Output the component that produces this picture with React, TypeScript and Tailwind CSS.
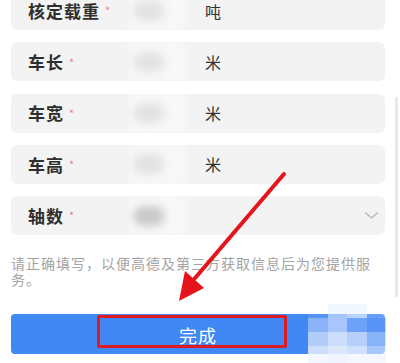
import React from "react";

const rows: { label: string; unit?: string; select?: boolean }[] = [
  { label: "核定载重", unit: "吨" },
  { label: "车长", unit: "米" },
  { label: "车宽", unit: "米" },
  { label: "车高", unit: "米" },
  { label: "轴数", select: true },
];

const font = { fontFamily: '"Noto Sans CJK SC", "Noto Sans", sans-serif' };

function FieldRow({ label, unit, select }: { label: string; unit?: string; select?: boolean }) {
  return (
    <div className="relative h-[39px] rounded-[6px] bg-[#f3f3f3] flex items-center overflow-hidden">
      {/* blurred value area */}
      <div className="absolute left-[118px] top-0 h-full w-[56px] bg-[#f8f8f8] blur-[3px]" />
      <div className="relative flex items-center pl-[17px] w-[194px]">
        <span className="text-[17px] font-bold tracking-[1px] text-[#2e2e2e]">{label}</span>
        <span className="ml-[5px] text-[11px] text-[#ec8080]">*</span>
        <div
          className={`absolute left-[122px] w-[32px] h-[20px] rounded-full blur-[4px] ${
            select ? "bg-[#c9c9c9]" : "bg-[#e2e2e2]"
          }`}
        />
      </div>
      {unit && <span className="relative text-[16px] text-[#333]">{unit}</span>}
      {select && (
        <svg className="absolute left-[353px]" width="15" height="9" viewBox="0 0 15 9">
          <path d="M1 1.5 L7.5 7 L14 1.5" fill="none" stroke="#b5b5b5" strokeWidth="1.3" />
        </svg>
      )}
    </div>
  );
}

export default function App() {
  return (
    <div className="relative w-[400px] h-[363px] bg-white overflow-hidden" style={font}>
      <div className="px-[11px] pr-[15px] -mt-[9px] flex flex-col gap-[12.25px]">
        {rows.map((r) => (
          <FieldRow key={r.label} {...r} />
        ))}
      </div>

      <p className="px-[11px] pr-[15px] mt-[20px] text-[14px] leading-[16px] tracking-[1px] text-[#a3a3a3]">
        请正确填写，以便高德及第三方获取信息后为您提供服务。
      </p>

      <div className="px-[11px] pr-[15px] mt-[27px]">
        <button className="relative w-full h-[40px] rounded-[4px] bg-[#4288f5] flex items-center justify-center">
          <span className="text-[18px] text-white tracking-[1px] mt-[2px]">完成</span>
          {/* red highlight frame */}
          <span className="absolute left-[86px] top-[1px] w-[190px] h-[33px] border-[3px] border-[#de1a22] rounded-[2px]" />
        </button>
      </div>

      {/* scrollbar */}
      <div className="absolute left-[395px] top-[97px] w-[3px] h-[200px] rounded-full bg-[#e8e8e8]" />

      {/* pixelated watermark */}
      <div className="absolute left-[308px] top-[304px] grid grid-cols-4 w-[78px]">
        <div className="h-[14px] bg-white/10" />
        <div className="h-[14px] bg-[#e8f0ff]/60" />
        <div className="h-[14px] bg-[#eef4ff]/70" />
        <div className="h-[14px] bg-white/20" />
        <div className="h-[14px] bg-[#a9c6fb]/70" />
        <div className="h-[14px] bg-[#c2d6fc]/80" />
        <div className="h-[14px] bg-[#8cb4fa]/60" />
        <div className="h-[14px] bg-[#7aa8f8]/40" />
        <div className="h-[14px] bg-[#cfdefd]/80" />
        <div className="h-[14px] bg-[#dde8fe]/90" />
        <div className="h-[14px] bg-[#d4e2fd]/80" />
        <div className="h-[14px] bg-[#b9d0fb]/60" />
        <div className="h-[17px] bg-[#f0f5ff]/80" />
        <div className="h-[17px] bg-[#eef3fe]/90" />
        <div className="h-[17px] bg-[#f3f7ff]/80" />
        <div className="h-[17px] bg-[#eef3fe]/60" />
      </div>

      {/* red annotation arrow */}
      <svg className="absolute left-0 top-0 pointer-events-none" width="400" height="363" viewBox="0 0 400 363">
        <line x1="284" y1="174" x2="190" y2="284" stroke="#e5141c" strokeWidth="4" strokeLinecap="round" />
        <polygon points="179,301 185,271 204,288" fill="#e5141c" />
      </svg>
    </div>
  );
}
